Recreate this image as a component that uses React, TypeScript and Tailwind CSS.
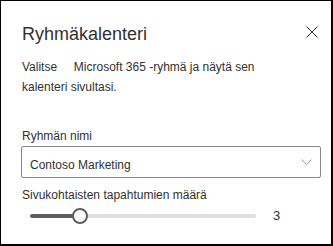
export default function App() {
  return (
    <div className="w-[333px] h-[246px] bg-white border-t border-l border-r-2 border-b-2 border-black pl-[20px] pr-[10px] font-['Liberation_Sans',Arial,sans-serif] text-[#323130]">
      <div className="flex items-start justify-between pt-[21px]">
        <h2 className="text-[18px] leading-[24px] pl-[1px]">Ryhmäkalenteri</h2>
        <button className="mt-[4px] mr-[3px] text-[#323130]" aria-label="Sulje">
          <svg width="12" height="12" viewBox="0 0 12 12" fill="none" stroke="currentColor" strokeWidth="1">
            <path d="M0.5 0.5 L11.5 11.5 M11.5 0.5 L0.5 11.5" />
          </svg>
        </button>
      </div>

      <p className="mt-[11px] max-w-[270px] text-[12px] leading-[20px] pl-[1px]">
        {"Valitse\u00a0\u00a0\u00a0\u00a0 Microsoft 365 -ryhmä ja näytä sen kalenteri sivultasi."}
      </p>

      <label className="block mt-[31px] text-[12px] leading-[16px] pl-[1px]">Ryhmän nimi</label>
      <div className="mt-[2px] h-[32px] border border-[#8a8886] rounded-[2px] flex items-center justify-between pl-[8px] pr-[8px] pt-[6px]">
        <span className="text-[12px] leading-[16px]">Contoso Marketing</span>
        <svg className="mt-[-6px]" width="11" height="6" viewBox="0 0 11 6" fill="none" stroke="#9a9cb0" strokeWidth="1">
          <path d="M0.5 0.5 L5.5 5.5 L10.5 0.5" />
        </svg>
      </div>

      <div className="mt-[9px] text-[12px] leading-[16px] pl-[1px]">Sivukohtaisten tapahtumien määrä</div>
      <div className="mt-[5px] h-[16px] flex items-center pl-[9px]">
        <div className="relative w-[226px] h-[4px] rounded-full bg-[#e1dfdd]">
          <div className="h-[4px] w-[50px] rounded-full bg-[#605e5c]" />
          <div className="absolute left-[42px] top-[-6px] w-[16px] h-[16px] rounded-full border-2 border-[#605e5c] bg-white" />
        </div>
        <span className="ml-[17px] text-[13px] leading-[16px]">3</span>
      </div>
    </div>
  );
}
